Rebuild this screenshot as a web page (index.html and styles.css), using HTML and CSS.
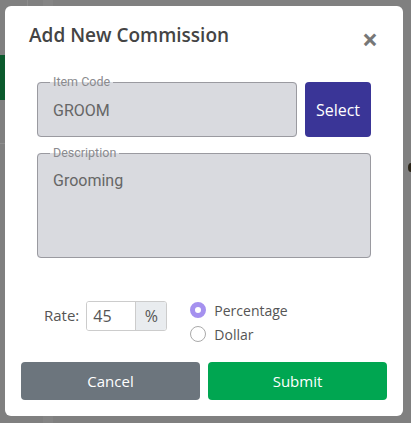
FILE: index.html
```html
<!DOCTYPE html>
<html lang="en">
<head>
<meta charset="utf-8">
<title>Add New Commission</title>
<meta name="viewport" content="width=device-width, initial-scale=1">
<link rel="stylesheet" href="styles.css">
</head>
<body>
	<div class="page">
		<div class="page-strip"></div>
		<div class="page-line"></div>
		<div class="page-col"></div>
		<div class="page-rule"></div>
		<div class="page-dot"></div>
	</div>

	<div class="modal">
		<div class="modal-head">
			<h2 class="modal-title">Add New Commission</h2>
			<span class="close">&times;</span>
		</div>

		<div class="modal-body">
			<div class="row">
				<fieldset class="field code">
					<legend>Item Code</legend>
					<div class="value">GROOM</div>
				</fieldset>
				<button class="btn select">Select</button>
			</div>

			<fieldset class="field desc">
				<legend>Description</legend>
				<div class="value">Grooming</div>
			</fieldset>

			<div class="rate-row">
				<label class="rate-label">Rate:</label>
				<div class="group">
					<input type="text" class="rate" value="45">
					<span class="addon">%</span>
				</div>
				<div class="radios">
					<label class="radio"><span class="dot on"></span>Percentage</label>
					<label class="radio"><span class="dot"></span>Dollar</label>
				</div>
			</div>
		</div>

		<div class="modal-foot">
			<button class="btn cancel">Cancel</button>
			<button class="btn submit">Submit</button>
		</div>
	</div>
</body>
</html>
```

FILE: styles.css
```css
*{ margin:0; padding:0; box-sizing:border-box; }
body{ width:411px; height:423px; background:#808080; font-family:"Open Sans", "Noto Sans", sans-serif; overflow:hidden; position:relative; }

/* dimmed page behind the dialog */
.page{ position:absolute; inset:0; }
.page-strip{ position:absolute; left:0; top:55px; width:5px; height:45px; background:#0c5a2d; }
.page-line{ position:absolute; left:27px; top:0; width:1px; height:6px; background:#8c8c8c; }
.page-col{ position:absolute; left:43px; top:0; width:10px; height:423px; background:#858585; }
.page-rule{ position:absolute; left:0; top:143px; width:5px; height:1px; background:#8e8e8e; }
.page-dot{ position:absolute; left:408px; top:163px; width:6px; height:9px; border-radius:50%; background:#2a2418; }

.modal{ position:absolute; left:5px; top:6px; width:398px; height:410px; background:#fff; border-radius:6px; display:flex; flex-direction:column; }

.modal-head{ display:flex; justify-content:space-between; align-items:flex-start; padding:15px 25px 0 24px; height:70px; }
.modal-title{ font-size:19px; font-weight:600; color:#444; line-height:28px; }
.close{ font-size:28px; font-weight:700; color:#777; line-height:28px; margin-top:4px; }

.modal-body{ padding:0 32px 0 32px; }
.row{ display:flex; gap:8px; align-items:flex-start; }

.field{ border:1px solid #9a9aa0; border-radius:4px; background:#d9dadf; padding:0 15px; font-family:Roboto, sans-serif; min-width:0; }
.field legend{ font-size:12.5px; color:#8a8a8e; padding:0 3px; margin-left:-3px; line-height:12px; }
.field .value{ font-size:16px; color:#666; }
.code{ flex:1; height:61px; }
.code .value{ line-height:20px; padding-top:13px; }
.desc{ height:111px; margin-top:10px; }
.desc .value{ line-height:20px; padding-top:12px; }

.select{ width:66px; height:55px; margin-top:6px; background:#3a3597; color:#fff; font-size:16px; border-radius:4px; }

.btn{ border:none; font-family:"Open Sans", sans-serif; }

.rate-row{ display:flex; align-items:flex-start; margin-top:43px; padding-left:7px; color:#555; font-size:15px; }
.rate-label{ line-height:30px; margin-top:-1px; margin-right:7px; }
.group{ display:flex; height:30px; border:1px solid #ccc; border-radius:3px; overflow:hidden; }
.rate{ width:49px; border:none; border-right:1px solid #ccc; padding-left:6px; font-size:16px; color:#555; font-family:"Open Sans", sans-serif; outline:none; }
.addon{ width:30px; background:#e9ecef; text-align:center; line-height:28px; font-size:16px; color:#555; }

.radios{ display:flex; flex-direction:column; margin-left:23px; margin-top:-3px; }
.radio{ display:flex; align-items:center; gap:8px; height:24px; font-size:14px; color:#555; }
.dot{ width:16px; height:16px; border-radius:50%; border:1px solid #aaa; background:#fff; }
.dot.on{ border:5px solid #a591ef; }

.modal-foot{ display:flex; gap:8px; padding:0 16px; margin-top:auto; margin-bottom:16px; }
.modal-foot .btn{ flex:1; height:38px; border-radius:4px; color:#fff; font-size:15px; }
.cancel{ background:#6c757d; }
.submit{ background:#00a651; }
```
